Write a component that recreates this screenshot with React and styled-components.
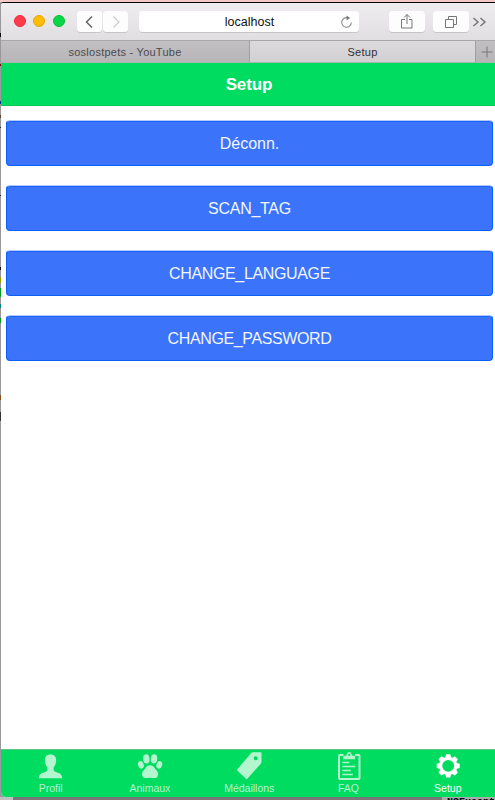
import React from 'react';
import styled, { createGlobalStyle } from 'styled-components';

const GlobalStyle = createGlobalStyle`
  * { box-sizing: border-box; }
  html, body { margin: 0; overflow: hidden; }
  body { font-family: "Liberation Sans", Arial, sans-serif; }
  button { font-family: inherit; margin: 0; padding: 0; }
  svg { display: block; }
`;

const Desktop = styled.div`
  width: 495px;
  height: 800px;
  overflow: hidden;
  display: flex;
  flex-direction: column;
  border-top: 2px solid #f5c8c8;
  background:
    linear-gradient(#000, #000) 0 31px / 1px 4px no-repeat,
    linear-gradient(#700, #700) 0 62px / 1px 2px no-repeat,
    linear-gradient(#003880, #003880) 0 99px / 1px 3px no-repeat,
    linear-gradient(#543, #543) 0 113px / 1px 3px no-repeat,
    linear-gradient(#222, #222) 0 125px / 1px 1px no-repeat,
    linear-gradient(#222, #222) 0 193px / 1px 1px no-repeat,
    linear-gradient(#111, #111) 0 265px / 1px 3px no-repeat,
    linear-gradient(#999900, #999900) 0 275px / 1px 6px no-repeat,
    linear-gradient(#009b20, #009b20) 0 286px / 1px 9px no-repeat,
    linear-gradient(#008080, #008080) 0 302px / 1px 4px no-repeat,
    linear-gradient(#009b20, #009b20) 0 316px / 1px 5px no-repeat,
    linear-gradient(#805020, #805020) 0 393px / 1px 5px no-repeat,
    linear-gradient(#333, #333) 0 410px / 1px 9px no-repeat,
    #999;
`;
const Window = styled.main`
  height: 795px;
  margin-left: 1px;
  flex: none;
  display: flex;
  flex-direction: column;
  overflow: hidden;
  border-top: 1px solid #050505;
  border-radius: 3px 0 0 5px;
  background: #fff;
`;
const Toolbar = styled.header`
  height: 37px;
  flex: none;
  display: flex;
  padding: 8px 0 0 12.5px;
  background: linear-gradient(#efedf0, #e0dee1);
`;
const Light = styled.i`
  width: 12px;
  height: 12px;
  margin: 4px 7.5px 0 0;
  border-radius: 50%;
  border: 1px solid ${p => p.$edge};
  background: ${p => p.$fill};
`;
const ToolButton = styled.button`
  width: ${p => p.$w}px;
  height: 21px;
  margin-left: ${p => p.$gap || 0}px;
  flex: none;
  display: flex;
  align-items: center;
  justify-content: center;
  border: 0;
  border-radius: 3.5px;
  background: #fefdfe;
  box-shadow: 0 1px 0 #c7c5c8;
`;
const Address = styled.div`
  width: 220px;
  height: 21px;
  margin-left: 11px;
  padding: 0 6px 0 20px;
  display: flex;
  align-items: center;
  border-radius: 3.5px;
  background: #fff;
  box-shadow: 0 1px 0 #c7c5c8;
  font-size: 12.5px;
  color: #111;
  span { flex: 1; text-align: center; padding-top: 1px; }
`;
const More = styled.div`margin: 5px 0 0 3px;`;
const Tabs = styled.nav`
  height: 23px;
  flex: none;
  display: flex;
  border-top: 1px solid #a9a7aa;
  border-bottom: 1px solid #a9b5ad;
`;
const Tab = styled.div`
  width: ${p => p.$w}px;
  flex: none;
  display: flex;
  align-items: center;
  justify-content: center;
  border-right: 1px solid #a19fa2;
  background: ${p => p.$active ? 'linear-gradient(#dcdadd, #d2d0d3)' : 'linear-gradient(#c1bfc2, #b7b5b8)'};
  font-size: 11px;
  letter-spacing: .25px;
  color: ${p => p.$active ? '#303033' : '#4d4b50'};
`;
const TitleBar = styled.h1`
  height: 43px;
  margin: 0;
  flex: none;
  display: flex;
  align-items: center;
  justify-content: center;
  padding: 1px 0 0 2px;
  border-bottom: 1px solid #0ac956;
  background: #00dc60;
  color: #fff;
  font-size: 17px;
  letter-spacing: -.1px;
`;
const Content = styled.section`
  flex: 1;
  display: flex;
  flex-direction: column;
  gap: 19px;
  padding: 14px 2px 0 5px;
`;
const ActionButton = styled.button`
  height: 46px;
  flex: none;
  border: 1px solid #0860f8;
  border-top-color: #b4c9fc;
  border-radius: 4px;
  background: #3b73fa;
  box-shadow: inset 0 1px 0 #1c64f8;
  color: #f2f6ff;
  font-size: 16px;
  letter-spacing: ${p => p.$track}px;
  padding-top: 1px;
`;
const BottomBar = styled.nav`
  height: 48px;
  flex: none;
  display: grid;
  grid-template-columns: repeat(5, 99.3px);
  border-top: 1px solid #5fc488;
  background: #00dc60;
`;
const NavItem = styled.div`
  display: flex;
  flex-direction: column;
  align-items: center;
  color: ${p => p.$active ? '#fff' : '#b3f5cf'};
  font-size: 10.5px;
  line-height: 12px;
  svg { height: 30px; width: 30px; margin-top: 1px; }
  span { margin-top: 1px; }
`;
const BackgroundStrip = styled.div`
  height: 3px;
  overflow: hidden;
  display: flex;
  flex: none;
  padding-left: 447px;
  background: linear-gradient(90deg, #c0c0c0 0 13px, #777 13px 442px, #aaa 442px);
  font: bold 10px/11px "Liberation Mono", monospace;
  color: #000;
  white-space: nowrap;
`;

const Line = ({ w, h, d, color = '#666', sw = 1.2 }) => (
  <svg width={w} height={h} viewBox={`0 0 ${w} ${h}`} fill="none" stroke={color} strokeWidth={sw}>
    <path d={d} />
  </svg>
);

const Icons = {
  profile: (
    <svg viewBox="0 0 30 30" fill="currentColor">
      <path d="M14.500 3.500c-4 0-6 2.500-5.600 6.500.2 3.200 1.400 4.800 2.400 6.500.5 2.900-.3 3.900-2.800 4.700-3.500 1.100-5.500 2-5.700 6h23.400c-.2-4-2.200-4.900-5.700-6-2.500-.8-3.300-1.800-2.800-4.700 1-1.700 2.200-3.300 2.400-6.500.4-4-1.600-6.500-5.600-6.500Z" />
    </svg>
  ),
  paw: (
    <svg viewBox="0 0 30 30" fill="currentColor">
      <ellipse cx="11.300" cy="7.900" rx="3.200" ry="4.600" transform="rotate(-5 11.300 7.900)" />
      <ellipse cx="19" cy="7.900" rx="3.200" ry="4.600" transform="rotate(5 19 7.900)" />
      <ellipse cx="5.900" cy="13.900" rx="2.800" ry="3.900" transform="rotate(-18 5.900 13.900)" />
      <ellipse cx="24.300" cy="13.900" rx="2.800" ry="3.900" transform="rotate(18 24.300 13.900)" />
      <path d="M15.100 14.200c-3.500 0-4.500 3-6.400 5.100-1.800 2-2.200 4.700-.8 6.700 1.400 1.800 4.400.8 7.200.8s5.800 1 7.200-.8c1.400-2 1-4.700-.8-6.700-1.900-2.100-2.900-5.100-6.400-5.100Z" />
    </svg>
  ),
  tag: (
    <svg viewBox="0 0 30 30" fill="currentColor">
      <path fillRule="evenodd" d="M18.500 1.200h8q1 0 1 1v8.800q0 1-.7 1.700L12.700 28.500 2.800 19 17.200 1.900q.5-.7 1.300-.7ZM21.700 5.200a2 2 0 1 0 0 4 2 2 0 0 0 0-4Z" />
    </svg>
  ),
  list: (
    <svg viewBox="0 0 30 30" fill="none" stroke="currentColor" strokeWidth="2">
      <path d="M9.500 4H6q-1 0-1 1v22q0 1 1 1h18.500q1 0 1-1V5q0-1-1-1H21" />
      <path fill="currentColor" stroke="none" fillRule="evenodd" d="M9.300 8.200V6q0-1.300 1.300-1.300h1.600C12.800 2.500 13.600 1 15.200 1s2.400 1.500 3 3.700h1.600Q21.100 4.700 21.100 6v2.200ZM15.200 2.700a1.100 1.100 0 1 0 0 2.200 1.100 1.100 0 0 0 0-2.200Z" />
      <path d="M8.300 11.500h7M8.300 15.500h13M8.300 19.500h8.500M8.300 23.500h10.500" strokeWidth="1.700" />
    </svg>
  ),
  gear: (
    <svg viewBox="0 0 30 30" fill="currentColor">
      <path fillRule="evenodd" d="m12.300 6.200.8-2.900h4.200l.8 2.900 1.200.5 2.600-1.500 3 3-1.500 2.600.5 1.200 2.800.8V17l-2.800.8-.5 1.200 1.500 2.600-3 3-2.600-1.500-1.200.5-.8 2.900h-4.200l-.8-2.900-1.200-.5-2.600 1.500-3-3L7 19l-.5-1.200-2.800-.8v-4.200l2.800-.8.5-1.200-1.500-2.600 3-3 2.600 1.500ZM15.200 9a5.900 5.900 0 1 0 0 11.800 5.900 5.900 0 0 0 0-11.800Z" />
    </svg>
  ),
};

const actions = [['Déconn.', 0], ['SCAN_TAG', -.28], ['CHANGE_LANGUAGE', -.35], ['CHANGE_PASSWORD', -.38]];
const destinations = [['Profil', 'profile'], ['Animaux', 'paw'], ['Médaillons', 'tag'], ['FAQ', 'list'], ['Setup', 'gear']];

export default function App() {
  return (
    <>
      <GlobalStyle />
      <Desktop>
        <Window>
          <Toolbar>
            <Light $fill="#ff3c49" $edge="#ed2938" />
            <Light $fill="#ffbd08" $edge="#eaa600" />
            <Light $fill="#08d747" $edge="#05bd37" />
            <ToolButton $w={25} $gap={5} aria-label="Back"><Line w={14} h={14} d="M9 1.500 3.500 7 9 12.500" sw={1.5} /></ToolButton>
            <ToolButton $w={25} $gap={1} aria-label="Forward"><Line w={14} h={14} d="m4.500 1.500 5.500 5.500-5.500 5.500" color="#ccc" /></ToolButton>
            <Address>
              <span>localhost</span>
              <svg width="13" height="14" viewBox="0 0 13 14" fill="none" stroke="#888" strokeWidth="1.100">
                <path d="M8 2.900A4.800 4.800 0 1 0 11.300 7.500" /><path d="M6.500.5 10.200 3 6.700 5.300Z" fill="#777" stroke="none" />
              </svg>
            </Address>
            <ToolButton $w={36} $gap={29.5} aria-label="Share"><Line w={14} h={17} d="M5 6.500H1.500v8.500h10.500V6.500H9M7 11V1.500M4 4.500l3-3 3 3" color="#777" sw={1} /></ToolButton>
            <ToolButton $w={36} $gap={8} aria-label="Show tabs"><Line w={14} h={14} d="M1.500 4.500h8v8h-8ZM4.500 4V1.500h8v8H10" color="#777" sw={1} /></ToolButton>
            <More><Line w={16} h={12} d="m1.500 2 4.500 4-4.500 4M8.500 2 13 6l-4.500 4" color="#777" sw={1.5} /></More>
          </Toolbar>
          <Tabs>
            <Tab $w={249}>soslostpets - YouTube</Tab>
            <Tab $w={226} $active>Setup</Tab>
            <Tab $w={23}><Line w={12} h={12} d="M6 .5v11M.5 6h11" color="#777" sw={1} /></Tab>
          </Tabs>
          <TitleBar>Setup</TitleBar>
          <Content>
            {actions.map(([label, track]) => <ActionButton key={label} $track={track}>{label}</ActionButton>)}
          </Content>
          <BottomBar>
            {destinations.map(([label, icon]) => (
              <NavItem key={label} $active={icon === 'gear'}>{Icons[icon]}<span>{label}</span></NavItem>
            ))}
          </BottomBar>
        </Window>
        <BackgroundStrip>NSExcept</BackgroundStrip>
      </Desktop>
    </>
  );
}
